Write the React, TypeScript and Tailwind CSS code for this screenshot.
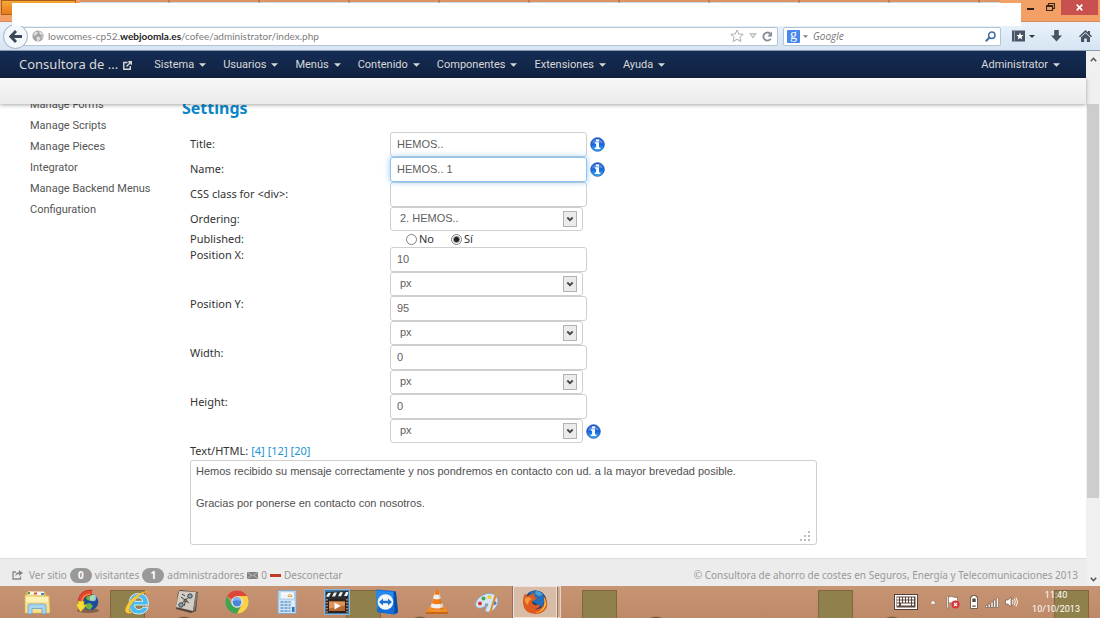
import React from "react";

const MENUS = ["Sistema", "Usuarios", "Menús", "Contenido", "Componentes", "Extensiones", "Ayuda"];
const SIDE_LINKS = [
  "Manage Forms",
  "Manage Scripts",
  "Manage Pieces",
  "Integrator",
  "Manage Backend Menus",
  "Configuration",
];
const TABS = Array.from({ length: 10 }, (_, i) => i);

function Caret() {
  return (
    <svg className="h-[4px] w-[7px] shrink-0" viewBox="0 0 8 4" aria-hidden="true">
      <path d="M0 0h8L4 4z" fill="currentColor" />
    </svg>
  );
}

function InfoIcon() {
  return (
    <svg className="h-[15px] w-[15px] shrink-0" viewBox="0 0 15 15" role="img" aria-label="Info">
      <defs>
        <linearGradient id="info" x1="0" y1="0" x2="0" y2="1">
          <stop offset="0" stopColor="#1c5ad0" />
          <stop offset="0.5" stopColor="#1668e0" />
          <stop offset="1" stopColor="#45b4f8" />
        </linearGradient>
      </defs>
      <circle cx="7.5" cy="7.5" r="6.8" fill="url(#info)" stroke="#1a4fa8" strokeWidth="0.8" />
      <path d="M2 6.5a5.6 5.6 0 0 1 11 0Q7.5 4.500 2 6.500z" fill="#fff" opacity="0.25" />
      <path d="M6 2.500h3v2H6zM4.800 5.300H9v5.300h1.300v1.500H4.800v-1.500h1.300V6.800H4.800z" fill="#fff" />
    </svg>
  );
}

function TextField({ id, value, focused, label }: { id: string; value: string; focused?: boolean; label?: string }) {
  return (
    <input
      id={id}
      type="text"
      aria-label={label}
      defaultValue={value}
      className={
        focused
          ? "relative z-10 h-[25px] w-[197px] rounded-[3px] border border-[#8cc4f4] bg-white px-[6px] pb-[2px] text-[11px] text-[#606060] shadow-[0_0_6px_rgba(82,168,236,0.6)] outline-none"
          : "h-[25px] w-[197px] rounded-[3px] border border-[#cfcfcf] bg-white px-[6px] pb-[2px] text-[11px] text-[#606060] outline-none"
      }
    />
  );
}

function SelectField({ id, value, label }: { id: string; value: string; label?: string }) {
  return (
    <div className="relative h-6 w-[193px]">
      <select
        id={id}
        aria-label={label}
        className="block h-6 w-full appearance-none rounded-[3px] border border-[#cfcfcf] bg-white px-[9px] pb-[2px] text-[11px] text-[#606060] outline-none"
      >
        <option>{value}</option>
      </select>
      <svg className="pointer-events-none absolute top-[4px] right-[6px] h-4 w-[14px]" viewBox="0 0 14 16" aria-hidden="true">
        <rect x="0.5" y="0.5" width="13" height="15" fill="#ebebeb" stroke="#b2b2b2" />
        <path d="M4.300 6.500L7 9.200L9.700 6.500" fill="none" stroke="#454545" strokeWidth="1.800" />
      </svg>
    </div>
  );
}

function Row({ label, htmlFor, info, children }: { label: string; htmlFor: string; info?: boolean; children: React.ReactNode }) {
  return (
    <div className="flex items-center">
      <label htmlFor={htmlFor} className="w-[200px] shrink-0">
        {label}
      </label>
      <div className="flex items-center gap-[3px] font-['Liberation_Sans',sans-serif]">
        {children}
        {info && <InfoIcon />}
      </div>
    </div>
  );
}

function SizeRow({ label, id, value, info }: { label: string; id: string; value: string; info?: boolean }) {
  return (
    <div className="flex items-start">
      <label htmlFor={id} className="w-[200px] shrink-0 leading-4">
        {label}
      </label>
      <div className="flex flex-col font-['Liberation_Sans',sans-serif]">
        <TextField id={id} value={value} />
        <div className="flex items-center gap-[3px]">
          <SelectField id={id + "-unit"} value="px" label={label + " unit"} />
          {info && <InfoIcon />}
        </div>
      </div>
    </div>
  );
}

function Radio({ id, label, checked }: { id: string; label: string; checked?: boolean }) {
  return (
    <span className="flex items-center gap-[2px]">
      <input
        id={id}
        name="published"
        type="radio"
        defaultChecked={checked}
        className="h-[11px] w-[11px] appearance-none rounded-full border border-[#808080] bg-white checked:bg-[radial-gradient(circle,#222_0_2px,#fff_4px)]"
      />
      <label htmlFor={id}>{label}</label>
    </span>
  );
}

function TitleBar() {
  return (
    <div className="flex h-[22px] items-start border-b border-[#d98c58] bg-[#f2a066]">
      <div className="relative h-[22px] min-w-0 flex-1">
        <button aria-label="Firefox menu" className="absolute top-0 left-[1px] h-[15px] w-[75px] border border-[#a8601c] bg-linear-to-b from-[#f6a837] to-[#e87a1c]" />
        <div className="absolute inset-x-0 top-0 flex h-[3px] overflow-hidden pl-[80px]">
          {TABS.map((t) => (
            <span key={t} className="h-[3px] w-[90px] shrink-0 border-r-2 border-b border-r-[#c97843] border-b-[#c9d9e6] bg-[#de9460]" />
          ))}
          <span className="h-[3px] w-[20px] shrink-0 border-b border-b-[#c9d9e6] bg-[#de9460]" />
        </div>
        <div className="absolute top-[3px] right-0 left-[12px] z-10 h-[23px] bg-white" />
      </div>
      <div className="flex h-[15px] w-[79px] items-center">
        <button aria-label="Minimizar" className="flex h-full w-[18px] items-center justify-center pt-[3px]">
          <svg className="h-[3px] w-[7px]" viewBox="0 0 7 3"><path d="M0 0h7v2H0z" fill="#2f1f14" /></svg>
        </button>
        <button aria-label="Restaurar" className="flex h-full w-[22px] items-center justify-center">
          <svg className="h-[9px] w-[9px]" viewBox="0 0 9 9" fill="none" stroke="#3b2819"><path d="M0.500 2.500h6v5h-6zM2.500 2V0.500h6v5H7M0.500 3.300h6" strokeWidth="1.200" /></svg>
        </button>
        <button aria-label="Cerrar" className="mr-[2px] flex h-full w-[37px] items-center justify-center bg-[#c8504f]">
          <svg className="h-[7px] w-[7px]" viewBox="0 0 7 7" stroke="#fff" strokeWidth="1.700"><path d="M0.700 0.700l5.600 5.600M6.300 0.700L0.700 6.300" /></svg>
        </button>
      </div>
    </div>
  );
}

function AddressBar() {
  return (
    <div className="flex h-[29px] items-center border-b border-[#8a9bb0] bg-linear-to-b from-[#e9f3fb] to-[#d6e5f3] pr-2 pl-[3px] text-[10px]">
      <button aria-label="Atrás" className="relative z-[5] flex h-[25px] w-[25px] shrink-0 items-center justify-center rounded-full border border-[#9eb0c3] bg-[#f3f8fc]">
        <svg className="h-[13px] w-[13px]" viewBox="0 0 13 13" fill="none" stroke="#3d4757" strokeWidth="2.800"><path d="M7 1L1.800 6.500L7 12M2 6.500h11" /></svg>
      </button>
      <div className="-ml-[5px] flex h-[19px] min-w-0 flex-1 items-center rounded-[2px] border border-[#b4c4d3] bg-white pr-1 pl-2">
        <svg className="mr-[4px] h-3 w-3 shrink-0" viewBox="0 0 12 12" aria-hidden="true">
          <circle cx="6" cy="6" r="5.600" fill="#a3a3a3" />
          <path d="M1.500 3.500L4 1.500l2 1-1 2-2 .5-1 2zM7 1l3 1.500 1 3-2-.5L7.500 3.500zM4.500 6.500l3 .5 1.200 1.500L6.500 11H5zM9 6l2 .5-.8 2.300z" fill="#dedede" />
        </svg>
        <div role="textbox" aria-label="Dirección" contentEditable suppressContentEditableWarning className="min-w-0 flex-1 truncate font-['Lato',sans-serif] text-[#7d7d7d] outline-none">
          lowcomes-cp52.<span className="font-bold text-[#222]">webjoomla.es</span>/cofee/administrator/index.php
        </div>
        <div className="flex items-center gap-[5px]">
          <button aria-label="Marcador">
            <svg className="block h-[14px] w-[14px]" viewBox="0 0 14 14"><path d="M7 1l1.800 4 4.400.4-3.300 2.900 1 4.300L7 10.300l-3.900 2.300 1-4.300L.8 5.400 5.200 5z" fill="#fcfcfc" stroke="#a9adb2" /></svg>
          </button>
          <button aria-label="Historial">
            <svg className="block h-[6px] w-2" viewBox="0 0 8 6"><path d="M.8.600h6.400L4 5z" fill="#d9dde2" stroke="#a7adb5" strokeWidth="0.800" /></svg>
          </button>
          <button aria-label="Recargar">
            <svg className="block h-[11px] w-[11px]" viewBox="0 0 11 11"><path d="M8.800 7.600A4 4 0 1 1 8 2.500" fill="none" stroke="#828b98" strokeWidth="1.800" /><path d="M10 .5v5H5.300z" fill="#828b98" /></svg>
          </button>
        </div>
      </div>
      <div className="ml-[5px] flex h-[19px] w-[218px] shrink-0 items-center rounded-[2px] border border-[#b4c4d3] bg-white pr-1 pl-[3px]">
        <button aria-label="Buscador" className="flex items-center gap-[3px] text-[#777]">
          <span className="flex h-[13px] w-[13px] items-center justify-center rounded-[1px] bg-[#4787ed] pb-[3px] font-['Liberation_Serif',serif] text-[14px] leading-none text-white">g</span>
          <svg className="h-[3px] w-[5px]" viewBox="0 0 6 3"><path d="M0 0h6L3 3z" fill="currentColor" /></svg>
        </button>
        <input aria-label="Buscar" placeholder="Google" className="ml-[5px] min-w-0 flex-1 font-['Open_Sans',sans-serif] italic outline-none placeholder:text-[#777]" />
        <button aria-label="Ir">
          <svg className="block h-[11px] w-[11px]" viewBox="0 0 11 11" fill="none" stroke="#3f6ea8"><circle cx="6.800" cy="4.200" r="3.200" strokeWidth="1.500" /><path d="M4.500 6.500L.8 10.200" strokeWidth="2" /></svg>
        </button>
      </div>
      <div className="ml-[11px] flex shrink-0 items-center text-[#4a5363]">
        <button aria-label="Marcadores" className="flex items-center gap-[4px]">
          <svg className="h-3 w-[13px]" viewBox="0 0 13 12"><path d="M0 .5h13v11H0z" fill="currentColor" /><path d="M8 2.500l1 2.400 2.600.2-2 1.700.6 2.600L8 8l-2.200 1.400.6-2.600-2-1.700 2.600-.2z" fill="#fff" /><path d="M2.500 1v10" stroke="#a2aab6" strokeWidth="0.800" /></svg>
          <svg className="h-[3px] w-[6px]" viewBox="0 0 6 3"><path d="M0 0h6L3 3z" fill="#333" /></svg>
        </button>
        <button aria-label="Descargas" className="ml-4">
          <svg className="block h-3 w-[11px]" viewBox="0 0 11 12"><path d="M3.200 0h4.600v5.500H11L5.500 11.500 0 5.500h3.200z" fill="currentColor" /></svg>
        </button>
        <button aria-label="Inicio" className="ml-[17px]">
          <svg className="block h-3 w-[13px]" viewBox="0 0 13 12"><path d="M6.500 0L9 2.300V1h2v3.200l2 2-1 1-5.500-5-5.500 5-1-1z" fill="currentColor" /><path d="M2 7.300l4.500-4 4.500 4V12H7.800V8.500H5.200V12H2z" fill="currentColor" /></svg>
        </button>
      </div>
    </div>
  );
}

const ICON = "h-[26px] w-[26px]";

const APPS: { name: string; art: React.ReactNode }[] = [
  {
    name: "Explorador de archivos",
    art: (
      <svg className={ICON} viewBox="0 0 26 26">
        <path d="M2 3l6-1 2 2 11-1 2 4v15H3z" fill="#dcb85b" />
        <path d="M4 2.500h16v4H4z" fill="#fbf7ea" />
        <path d="M4 3h2v2H4z" fill="#4a9c4d" /><path d="M10 3.500h3v2h-3z" fill="#d84a35" /><path d="M17 4h3v2h-3z" fill="#4386cf" />
        <path d="M1 6h9l1 1h14l1 17H1z" fill="#f7e08e" stroke="#d9ba58" strokeWidth="0.600" />
        <path d="M2 8h22v5H2z" fill="#fdf1b7" />
        <path d="M4 25v-8q0-2 2-2h14q2 0 2 2v8h-4v-5.500H8V25z" fill="#a8d4f0" stroke="#5b9bc9" strokeWidth="0.700" />
      </svg>
    ),
  },
  {
    name: "Internet Download Manager",
    art: (
      <svg className={ICON} viewBox="0 0 26 26">
        <ellipse cx="14" cy="21.500" rx="11" ry="2.500" fill="#5d4637" opacity="0.6" />
        <circle cx="16" cy="13" r="8.300" fill="#1d4c9c" />
        <path d="M13 6q5-2 8 1l-1 4-4 1-4-2zM11 15l5-1 3 3-3 4-4-2z" fill="#6cb33f" />
        <circle cx="19" cy="9" r="3.200" fill="#c3ecf7" opacity="0.7" />
        <path d="M18 3.500Q7 3 6.500 14" fill="none" stroke="#8a1f15" strokeWidth="5.500" />
        <path d="M18 3.500Q7 3 6.500 13" fill="none" stroke="#e4452f" strokeWidth="4.500" />
        <path d="M16 5Q9 6 8 12" fill="none" stroke="#f58b50" strokeWidth="1.500" />
        <path d="M4 12h6v4h3l-6.500 7L1.500 15H4z" fill="#f7dc35" stroke="#a8942a" strokeWidth="0.600" />
      </svg>
    ),
  },
  {
    name: "Internet Explorer",
    art: (
      <svg className={ICON} viewBox="0 0 26 26">
        <path d="M24.500 16H10.500q.5 4.500 4.500 4.500 3 0 4-2.300h5.200q-2 6.800-9.500 6.800-9.700 0-9.700-10Q5 4.500 14.700 4.500 24.500 4.500 24.500 16zM10.500 12.300h8.300q-.3-3.600-4.100-3.600t-4.200 3.600z" fill="#4bbcf0" stroke="#d3f1ff" strokeWidth="1" />
        <path d="M25 5.500q1-5-6-2.500Q8 7 3 16q-4 7 1 8.500 2.500.5 5-1.500-4 1-4-2 0-3 5-9Q17 4.500 22 3q2.700-.5 3 2.500z" fill="#fac93a" stroke="#d8951d" strokeWidth="0.400" />
      </svg>
    ),
  },
  {
    name: "Croquis",
    art: (
      <svg className={ICON} viewBox="0 0 26 26">
        <path d="M4 3l2-2 18 2-2 19-5 2L2 20z" fill="#51453c" /><path d="M5 2l17 1-3 19L2 18z" fill="#d3cdc1" /><path d="M22 3l2 1-3 17-2 1z" fill="#7e776d" />
        <g fill="none" stroke="#3e3e3e" strokeWidth="1"><path d="M7 8l8 6M7 15l9-8M12 11l-2 6M8 5l3 2" /><circle cx="16" cy="7" r="2.200" fill="#8fa4b8" /><circle cx="7" cy="16" r="2.200" fill="#8fa4b8" /><circle cx="11.500" cy="11.500" r="1.300" fill="#8a8a8a" /></g>
      </svg>
    ),
  },
  {
    name: "Google Chrome",
    art: (
      <svg className={ICON} viewBox="0 0 26 26">
        <path d="M13 13L3 7.300A11.500 11.500 0 0 1 23 7.300z" fill="#dc4738" /><path d="M13 7.300h10A11.500 11.500 0 0 1 13 24.500l5-8.600z" fill="#fbd246" />
        <path d="M13 24.500A11.500 11.500 0 0 1 3 7.300l5 8.600 8 2z" fill="#3ea553" /><path d="M13 7.300h10l.8 2L16 11z" fill="#fbd246" />
        <circle cx="13" cy="13" r="5.700" fill="#f1f1f1" /><circle cx="13" cy="13" r="4.500" fill="#4a87d8" /><path d="M9 12a4 4 0 0 1 8 0q-4-1.500-8 0z" fill="#83b3ee" />
      </svg>
    ),
  },
  {
    name: "Calculadora",
    art: (
      <svg className={ICON} viewBox="0 0 26 26">
        <rect x="4" y="1.500" width="18" height="23" rx="1" fill="#cfe2f3" stroke="#84a9cb" /><rect x="6" y="3" width="14.500" height="7" fill="#edf6fc" stroke="#91b6d4" strokeWidth="0.600" />
        <path d="M14 7.500a2 2 0 1 1 4 0z" fill="none" stroke="#e2a34e" /><path d="M7 4h12" stroke="#fff" />
        <g fill="#7aabd6"><path d="M6.500 12h3v2h-3zM10.500 12h3v2h-3zM6.500 15h3v2h-3zM10.500 15h3v2h-3zM6.500 18h3v2h-3zM10.500 18h3v2h-3zM6.500 21h3v2h-3zM10.500 21h3v2h-3zM14.500 12h2v2h-2zM14.500 15h2v2h-2zM14.500 18h2v2h-2zM14.500 21h2v2h-2z" /></g>
        <path d="M18 12h2.500v2H18zM18 15h2.500v2H18z" fill="#e9f3fa" /><path d="M18 18h2.500v5H18z" fill="#2f74b5" />
      </svg>
    ),
  },
  {
    name: "Movie Maker",
    art: (
      <svg className={ICON} viewBox="0 0 26 26">
        <path d="M.5.500h25v25H.500z" fill="#3f77a5" stroke="#8fb6d4" /><path d="M2 3l22-1v8H2z" fill="#262c33" />
        <path d="M4 4l3-.2-2 4H2zM10 3.500h3l-2 4H8zM16 3.300h3l-2 4h-3zM22 3h2v2l-1 2h-3z" fill="#f0f0f0" />
        <path d="M2 10h22v14H2z" fill="#2f2118" /><path d="M5 12.500h16v9.500H5z" fill="#b76833" /><path d="M5 12.500h16v4l-16 3z" fill="#de935b" /><path d="M10.500 13.500v7l6-3.500z" fill="#fff" />
        <path d="M3 10v14M23 10v14" stroke="#e6e6e6" strokeDasharray="1.500 1.500" />
      </svg>
    ),
  },
  {
    name: "TeamViewer",
    art: (
      <svg className={ICON} viewBox="0 0 26 26">
        <path d="M3 .5q-1 0-1 1L3 22q0 1 1.500 1.500L20 25.500q2 0 4-2.500L22 4q0-2-2-2z" fill="#126dd7" /><path d="M20 2q2 0 2 2l2 19-3.500 2z" fill="#064aa4" />
        <path d="M2 1.500L19 3v8Q8 10 3 20z" fill="#3299f3" opacity="0.7" />
        <circle cx="11.500" cy="13" r="7.800" fill="#f3f6fa" /><path d="M5 13l4-3.500v2.300h5V9.500l4 3.500-4 3.500v-2.300H9v2.300z" fill="#1a70d4" />
      </svg>
    ),
  },
  {
    name: "VLC",
    art: (
      <svg className={ICON} viewBox="0 0 26 26">
        <path d="M4 18h18l2 6.500H2z" fill="#f08c22" /><path d="M2 23h22v2H2z" fill="#c9661a" />
        <path d="M11.500 1h3L20 20q-7 3.500-14 0z" fill="#f2f0ee" /><path d="M11.500 1h3l1.200 4.200q-2.700 1-5.400 0zM9 9.500q4 1.700 8 0l1.300 4.700q-5.300 2-10.600 0zM6.500 18q6.500 3 13 0l.5 2q-7 3.500-14 0z" fill="#f07d17" />
        <path d="M14.500 1L20 20l-3 1.300L13.500 1z" fill="#8f4a20" opacity="0.180" />
      </svg>
    ),
  },
  {
    name: "Paint",
    art: (
      <svg className={ICON} viewBox="0 0 26 26">
        <path d="M9 6q8-4 13 1 4 5 0 11t-9 5q-3-.5-1-3.500 1-2-1.500-2Q7 20 4 19q-4-2-2-6 2-5 7-7z" fill="#d5e7f6" stroke="#7aa1c3" strokeWidth="0.800" />
        <circle cx="6" cy="14.500" r="2" fill="#d7372e" /><circle cx="9.500" cy="9.500" r="2" fill="#4aa44b" /><circle cx="15.500" cy="8" r="2" fill="#f0cf3b" /><circle cx="20.500" cy="14" r="2" fill="#487fc8" /><circle cx="12.500" cy="16" r="1.800" fill="#8b9ca9" />
        <path d="M15 24L20.500 6.500l2 .8L17 24l-2 1z" fill="#e38b2d" /><path d="M20 5l1.500-3.500L26 1l-3.500 6.500z" fill="#c99a60" />
      </svg>
    ),
  },
];

function Firefox() {
  return (
    <svg className={ICON} viewBox="0 0 26 26">
      <circle cx="13.500" cy="12.500" r="11" fill="#173f79" /><path d="M7 4Q13-1 20 4l3 7-3 7-9-5z" fill="#2470b8" /><path d="M14 2q5 0 7 4l-4 1-4-2z" fill="#69bde5" opacity="0.6" />
      <path d="M1.500 8L3 4.500 5.500 7q2-1.500 4-1L10 3.500l3 3q-1 2 2 3l-3 2q-2 0-2 2 2 4 6 2l2 1q-1 3-5 3.500 6 1 9-5 1-5-1-9 6 7 3.500 13Q21 25 13 25 2 24.500 1 14.500q-.2-3.500.5-6.500z" fill="#df5a1e" />
      <path d="M22 8q4 7 0 12-4 4-9 4 7-2 9-7 1-4 0-9z" fill="#f9c53b" /><path d="M3 9l4-1 3 2-3 2-1 4q-4-2-3-7z" fill="#f29a38" />
    </svg>
  );
}

function Taskbar() {
  return (
    <footer className="relative flex h-8 shrink-0 items-center overflow-hidden bg-linear-to-b from-[#c79474] to-[#bd8969]">
      <svg className="absolute inset-0 h-full w-full" aria-hidden="true">
        <defs>
          <pattern id="wallpaper" x="110" width="236" height="32" patternUnits="userSpaceOnUse">
            <rect x="0.500" y="4.500" width="34" height="30" fill="#90804c" stroke="#7e6640" />
            <ellipse cx="74" cy="33" rx="6" ry="2.500" fill="#80603d" />
          </pattern>
        </defs>
        <rect width="100%" height="100%" fill="url(#wallpaper)" />
      </svg>
      <div className="relative flex items-center pl-3">
        {APPS.map((app) => (
          <button key={app.name} aria-label={app.name} className="flex h-8 w-[50px] items-center justify-center">
            {app.art}
          </button>
        ))}
        <button aria-label="Firefox" className="ml-[1px] flex h-8 items-stretch">
          <span className="flex w-[44px] items-center justify-center border border-[#f0e2d8] bg-[#d7bca8] outline outline-[#94705a]">
            <Firefox />
          </span>
          <span className="w-[4px] border border-l-[#94705a] border-[#e6d3c6] bg-[#cfae97]" />
        </button>
      </div>
      <div className="relative ml-auto flex items-center pr-[20px] text-white">
        <button aria-label="Teclado táctil">
          <svg className="block h-4 w-6" viewBox="0 0 24 16"><rect x="0.500" y="0.500" width="23" height="15" fill="#fff" stroke="#574033" /><rect x="2.500" y="2.500" width="19" height="11" fill="#5b4539" /><path d="M3 4.500h18M3 7.500h18M3 10.500h3M18 10.500h3" stroke="#fff" strokeWidth="2" strokeDasharray="2 1" /><path d="M7 10.500h10" stroke="#fff" strokeWidth="2" /></svg>
        </button>
        <button aria-label="Iconos ocultos" className="ml-3">
          <svg className="block h-1 w-[6px]" viewBox="0 0 6 4"><path d="M0 4h6L3 0z" fill="#fff" stroke="#6c5142" strokeWidth="0.400" /></svg>
        </button>
        <svg className="ml-[10px] h-[14px] w-[14px]" viewBox="0 0 14 14" aria-label="Centro de actividades"><path d="M1 1h1.500v12H1z" fill="#fff" stroke="#5c4639" strokeWidth="0.400" /><path d="M2.500 2q3-1 5 0t4 0v6q-2 .7-4 0t-5 0z" fill="#fff" stroke="#5c4639" strokeWidth="0.500" /><circle cx="9.500" cy="9.500" r="4" fill="#d93437" /><path d="M8 8l3 3M11 8l-3 3" stroke="#fff" strokeWidth="1.200" /></svg>
        <svg className="ml-[10px] h-[14px] w-2" viewBox="0 0 8 14" aria-label="Batería"><path d="M2 .5h4V2h1.500v11.500h-7V2H2z" fill="#fff" stroke="#5c4639" strokeWidth="0.800" /><path d="M2.300 3.500h3.400V7H2.300zM2.300 10.500h3.400v1.200H2.300z" fill="#5c4639" /></svg>
        <svg className="ml-[7px] h-[11px] w-[14px]" viewBox="0 0 14 11" aria-label="Red" fill="#fff" stroke="#5c4639" strokeWidth="0.500"><path d="M.5 8.500h2v2h-2zM3.200 7h2v3.500h-2zM6 5h2v5.500H6zM8.700 3h2v7.500h-2zM11.400.8h2v9.700h-2z" /></svg>
        <svg className="ml-[6px] h-3 w-[13px]" viewBox="0 0 13 12" aria-label="Volumen"><path d="M.5 4h2.500l3-3v10L3 8H.500z" fill="#fff" stroke="#5c4639" strokeWidth="0.600" /><path d="M7.500 4q1 2 0 4M9.300 2.700q2 3.300 0 6.600M11 1.500q3 4.500 0 9" fill="none" stroke="#fff" strokeWidth="0.900" /></svg>
        <div className="ml-[14px] text-center text-[9px] leading-[14px]">
          <div>11:40</div>
          <div>10/10/2013</div>
        </div>
      </div>
    </footer>
  );
}

function Badge({ children }: { children: React.ReactNode }) {
  return (
    <span className="mx-[3px] flex h-[15px] w-[22px] items-center justify-center rounded-full bg-[#999] font-bold text-white">
      {children}
    </span>
  );
}

function StatusBar() {
  return (
    <div className="flex h-7 shrink-0 items-center border-t border-[#dcdcdc] bg-[#ececec] pt-[5px] pr-2 pl-3 font-['Noto_Sans',sans-serif] text-[10px] text-[#999]">
      <div className="flex items-center">
        <svg className="mr-[6px] h-[10px] w-[11px]" viewBox="0 0 11 10" aria-hidden="true"><path d="M4 2H1v7h7.500V6.500" fill="none" stroke="#888" strokeWidth="1.300" /><path d="M7 0l4 3-4 3V4Q4 4 3.500 6.500 3 2.300 7 2z" fill="#888" /></svg>
        <a href="#sitio">Ver sitio</a>
        <Badge>0</Badge>
        visitantes
        <Badge>1</Badge>
        administradores
        <svg className="mx-[3px] h-[7px] w-[11px]" viewBox="0 0 11 7" aria-hidden="true"><path d="M0 0h11v7H0z" fill="#808080" /><path d="M.5.500l5 3.500 5-3.500M.5 6.500L4 3.500M10.500 6.500L7 3.500" fill="none" stroke="#dcdcdc" strokeWidth="0.700" /></svg>
        0
        <span className="mx-[3px] h-[3px] w-[11px] bg-[#c23b25]" />
        <a href="#salir">Desconectar</a>
      </div>
      <p className="ml-auto whitespace-nowrap">© Consultora de ahorro de costes en Seguros, Energía y Telecomunicaciones 2013</p>
    </div>
  );
}

function Scrollbar() {
  return (
    <div className="flex w-[14px] shrink-0 flex-col items-center bg-[#f0f0f0]" aria-hidden="true">
      <svg className="my-[6px] h-[5px] w-[7px]" viewBox="0 0 7 5"><path d="M.8 4.200L3.500 1.300l2.700 2.900" fill="none" stroke="#555" strokeWidth="1.600" /></svg>
      <div className="mt-9 h-[394px] w-3 bg-[#cdcdcd]" />
      <svg className="mt-auto mb-[4px] h-[5px] w-[7px]" viewBox="0 0 7 5"><path d="M.8.800l2.700 2.900L6.200.800" fill="none" stroke="#555" strokeWidth="1.600" /></svg>
    </div>
  );
}

export default function App() {
  return (
    <div className="flex h-screen flex-col overflow-hidden bg-white font-['Roboto',sans-serif] text-[11px]">
      <TitleBar />
      <AddressBar />
      <div className="flex min-h-0 flex-1">
        <div className="flex min-w-0 flex-1 flex-col">
          <nav className="flex h-[27px] shrink-0 items-center bg-linear-to-b from-[#142c54] to-[#112240] pt-[1px] pr-[26px] pl-[19px] text-[#d9d9d9]">
            <a href="#inicio" className="mr-[22px] flex items-center gap-[5px] font-['Noto_Sans',sans-serif] text-[13px]">
              Consultora de ...
              <svg className="h-[9px] w-[9px]" viewBox="0 0 9 9" fill="none" stroke="currentColor" strokeWidth="1.400" aria-hidden="true"><path d="M4.500 1.500H.8v6.700h6.500V5M5.300.8h3v3M8.200.8L3.500 5.500" /></svg>
            </a>
            <div className="flex items-center gap-[17px]">
              {MENUS.map((m) => (
                <button key={m} className="flex items-center gap-[5px]">
                  {m}
                  <Caret />
                </button>
              ))}
            </div>
            <button className="ml-auto flex items-center gap-[5px]">
              Administrator
              <Caret />
            </button>
          </nav>
          <div className="relative z-20 h-[26px] shrink-0 bg-linear-to-b from-[#f8f8f8] to-[#ebebeb] shadow-[0_1px_4px_rgba(0,0,0,0.35)]" />
          <main className="flex min-h-0 flex-1 overflow-hidden">
            <aside className="-mt-[10px] w-[182px] shrink-0 pl-[30px] text-[#555]">
              <ul>
                {SIDE_LINKS.map((s) => (
                  <li key={s} className="h-[21px] leading-[21px]">
                    <a href="#menu">{s}</a>
                  </li>
                ))}
              </ul>
            </aside>
            <form className="min-w-0 flex-1 font-['Noto_Sans',sans-serif] text-[#333]">
              <h2 className="-mt-[7px] h-[35px] text-[16px] leading-[22px] font-bold text-[#0b87c9]">Settings</h2>
              <div className="pl-2">
                <Row label="Title:" htmlFor="title" info>
                  <TextField id="title" value="HEMOS.." />
                </Row>
                <Row label="Name:" htmlFor="name" info>
                  <TextField id="name" value="HEMOS.. 1" focused />
                </Row>
                <Row label="CSS class for <div>:" htmlFor="css">
                  <TextField id="css" value="" />
                </Row>
                <Row label="Ordering:" htmlFor="ordering">
                  <SelectField id="ordering" value="2. HEMOS.." />
                </Row>
                <fieldset className="flex h-4 items-center">
                  <span className="w-[216px] shrink-0">Published:</span>
                  <span className="flex items-center gap-[17px]">
                    <Radio id="no" label="No" />
                    <Radio id="si" label="Sí" checked />
                  </span>
                </fieldset>
                <SizeRow label="Position X:" id="px" value="10" />
                <SizeRow label="Position Y:" id="py" value="95" />
                <SizeRow label="Width:" id="width" value="0" />
                <SizeRow label="Height:" id="height" value="0" info />
                <div className="flex h-[17px] items-center gap-[3px]">
                  <label htmlFor="html">Text/HTML:</label>
                  <a href="#4" className="text-[#1a93d0]">[4]</a>
                  <a href="#12" className="text-[#1a93d0]">[12]</a>
                  <a href="#20" className="text-[#1a93d0]">[20]</a>
                </div>
                <div className="relative w-[627px] max-w-full">
                  <textarea
                    id="html"
                    defaultValue={"Hemos recibido su mensaje correctamente y nos pondremos en contacto con ud. a la mayor brevedad posible.\n\nGracias por ponerse en contacto con nosotros."}
                    className="block h-[85px] w-full resize-none rounded-[3px] border border-[#cfcfcf] px-[5px] py-[2px] font-['Liberation_Sans',sans-serif] text-[11px] leading-4 text-[#505050] outline-none"
                  />
                  <svg className="pointer-events-none absolute right-[7px] bottom-[4px] h-[10px] w-[10px]" viewBox="0 0 10 10" fill="#bdbdbd" aria-hidden="true">
                    <path d="M8 0h2v2H8zM4 4h2v2H4zM8 4h2v2H8zM0 8h2v2H0zM4 8h2v2H4zM8 8h2v2H8z" />
                  </svg>
                </div>
              </div>
            </form>
          </main>
          <StatusBar />
        </div>
        <Scrollbar />
      </div>
      <Taskbar />
    </div>
  );
}
